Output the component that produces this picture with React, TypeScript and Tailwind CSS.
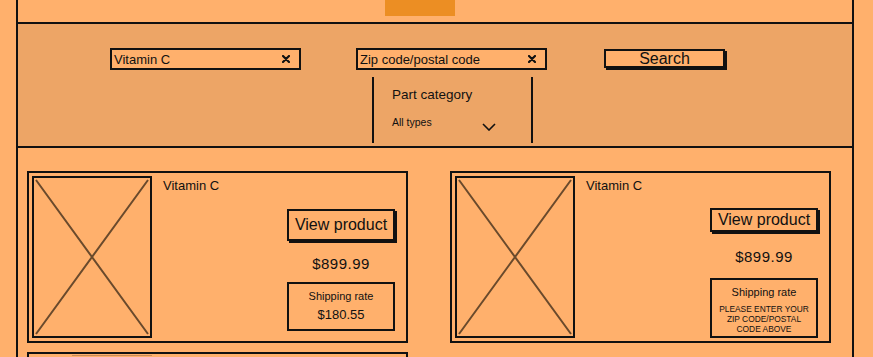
import React from 'react';

type CardProps = {
  name: string;
  btnH: string;
  btnMt: string;
  priceMt: string;
  shipMt: string;
  shipH: string;
  shipping: React.ReactNode;
};

const font = { fontFamily: '"Liberation Sans", Arial, sans-serif' };

// small bold clear icon
const ClearIcon = () => (
  <svg width="8" height="8" viewBox="0 0 8 8" className="shrink-0">
    <path d="M1 1L7 7M7 1L1 7" stroke="#111" strokeWidth="2.2" strokeLinecap="round" />
  </svg>
);

const SearchInput = ({ value }: { value: string }) => (
  <div className="w-[191px] h-[22px] border-2 border-[#111] bg-[#ffb06c] flex items-center justify-between pl-[2px] pr-[9px]">
    <span className="text-[13px] leading-none text-[#111]">{value}</span>
    <ClearIcon />
  </div>
);

const ImagePlaceholder = () => (
  <div className="w-[120px] h-[162px] border-2 border-[#111] shrink-0">
    <svg className="w-full h-full" viewBox="0 0 116 158" preserveAspectRatio="none">
      <path d="M2 2L114 156M114 2L2 156" stroke="#6a4a2c" strokeWidth="2" />
    </svg>
  </div>
);

const ProductCard = ({ name, btnH, btnMt, priceMt, shipMt, shipH, shipping }: CardProps) => (
  <div className="w-[381px] h-[172px] border-2 border-[#111] p-[3px] flex">
    <ImagePlaceholder />
    <div className="flex-1 flex flex-col">
      <div className="pl-[11px] pt-[2px] text-[13px] leading-[16px] text-[#111]">{name}</div>
      <div className={`self-end mr-[8px] w-[108px] flex flex-col items-center ${btnMt}`}>
        <div
          className={`w-[108px] ${btnH} border-2 border-[#111] shadow-[2px_2px_0_#111] flex items-center justify-center text-[16px] leading-none text-[#111]`}
        >
          View product
        </div>
        <div className={`${priceMt} text-[15px] leading-[16px] tracking-[0.5px] text-[#111]`}>$899.99</div>
        <div className={`${shipMt} w-[108px] ${shipH} border-2 border-[#111] flex flex-col items-center`}>
          {shipping}
        </div>
      </div>
    </div>
  </div>
);

export default function App() {
  return (
    <div className="w-[873px] h-[357px] overflow-hidden bg-[#ffb06c]" style={font}>
      <div className="ml-[16px] w-[838px] min-h-[357px] border-x-2 border-[#111]">
        {/* Top bar */}
        <div className="h-[24px] border-b-2 border-[#111]">
          <div className="ml-[367px] w-[70px] h-[16px] bg-[#ec8e23]" />
        </div>

        {/* Search band */}
        <div className="h-[124px] border-b-2 border-[#111] bg-[#eda566] flex items-start pl-[92px] pt-[24px]">
          <SearchInput value="Vitamin C" />
          <div className="ml-[55px] flex flex-col">
            <SearchInput value="Zip code/postal code" />
            <div className="ml-[16px] mt-[7px] w-[161px] h-[66px] border-x-2 border-[#111] pl-[18px] pt-[10px] text-[#111]">
              <div className="text-[13.5px] leading-[16px]">Part category</div>
              <div className="mt-[13px] flex items-start">
                <span className="text-[10.5px] leading-[12px]">All types</span>
                <svg width="14" height="8" viewBox="0 0 14 8" className="ml-[50px] mt-[7px]">
                  <path d="M1 1L7 7L13 1" stroke="#111" strokeWidth="1.6" fill="none" />
                </svg>
              </div>
            </div>
          </div>
          <div className="ml-[57px] mt-[1px] w-[121px] h-[19px] border-2 border-[#111] shadow-[2px_2px_0_#111] bg-[#ffb06c] flex items-center justify-center text-[16px] leading-none text-[#111]">
            Search
          </div>
        </div>

        {/* Results */}
        <div className="pl-[9px] pt-[23px] flex flex-col gap-[9px]">
          <div className="flex gap-[42px]">
            <ProductCard
              name="Vitamin C"
              btnH="h-[32px]"
              btnMt="mt-[15px]"
              priceMt="mt-[15px]"
              shipMt="mt-[10px]"
              shipH="h-[49px]"
              shipping={
                <>
                  <div className="mt-[5px] text-[11px] leading-[14px] text-[#111]">Shipping rate</div>
                  <div className="mt-[4px] text-[13px] leading-[16px] text-[#111]">$180.55</div>
                </>
              }
            />
            <ProductCard
              name="Vitamin C"
              btnH="h-[24px]"
              btnMt="mt-[14px]"
              priceMt="mt-[17px]"
              shipMt="mt-[13px]"
              shipH="h-[60px]"
              shipping={
                <>
                  <div className="mt-[5px] text-[11px] leading-[14px] text-[#111]">Shipping rate</div>
                  <div className="mt-[5px] text-[8.4px] leading-[10px] text-center text-[#111]">
                    PLEASE ENTER YOUR
                    <br />
                    ZIP CODE/POSTAL
                    <br />
                    CODE ABOVE
                  </div>
                </>
              }
            />
          </div>
          {/* next row, only its top edge is in view */}
          <div className="flex">
            <div className="w-[381px] h-[172px] border-2 border-[#111] pt-[1px] pl-[43px]">
              <div className="w-[80px] h-[1px] bg-[#c98a58]" />
            </div>
          </div>
        </div>
      </div>
    </div>
  );
}
